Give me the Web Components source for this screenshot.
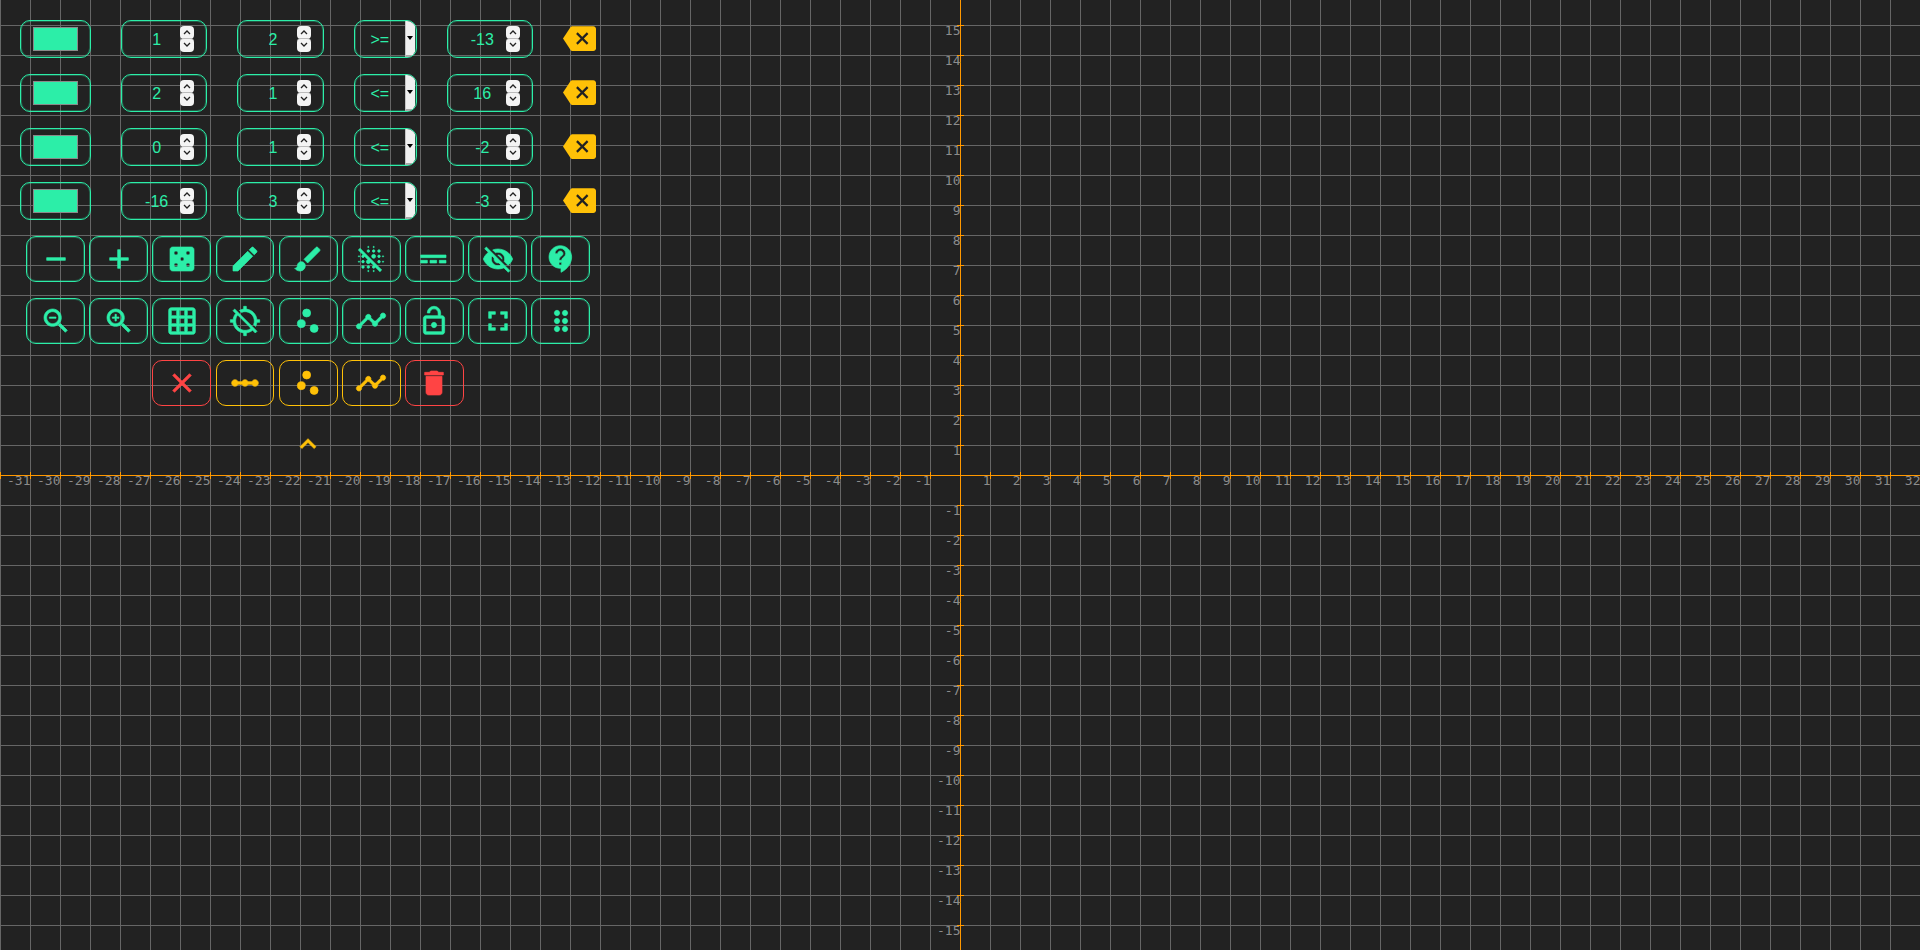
<!DOCTYPE html>
<html>
<head>
<meta charset="utf-8">
<title>Linear inequalities</title>
<style>
  html, body { margin: 0; height: 100%; background: #222; overflow: hidden; }
  body { font-family: "Liberation Sans", Arial, sans-serif; color: #2ceea8; }
</style>
</head>
<body>
<graph-canvas></graph-canvas>
<control-panel>
  <equation-row a="1" b="2" op="&gt;=" c="-13"></equation-row>
  <equation-row a="2" b="1" op="&lt;=" c="16"></equation-row>
  <equation-row a="0" b="1" op="&lt;=" c="-2"></equation-row>
  <equation-row a="-16" b="3" op="&lt;=" c="-3"></equation-row>
  <button-row>
    <icon-button icon="remove"></icon-button>
    <icon-button icon="add"></icon-button>
    <icon-button icon="casino"></icon-button>
    <icon-button icon="edit"></icon-button>
    <icon-button icon="brush"></icon-button>
    <icon-button icon="blurOff"></icon-button>
    <icon-button icon="powerInput"></icon-button>
    <icon-button icon="visibilityOff"></icon-button>
    <icon-button icon="contactSupport"></icon-button>
  </button-row>
  <button-row>
    <icon-button icon="zoomOut"></icon-button>
    <icon-button icon="zoomIn"></icon-button>
    <icon-button icon="gridOn"></icon-button>
    <icon-button icon="gpsOff"></icon-button>
    <icon-button icon="scatter"></icon-button>
    <icon-button icon="timeline"></icon-button>
    <icon-button icon="lockOpen"></icon-button>
    <icon-button icon="fullscreen"></icon-button>
    <icon-button icon="drag"></icon-button>
  </button-row>
  <button-row>
    <icon-button icon="clear" tone="danger"></icon-button>
    <icon-button icon="linearScale" tone="warn"></icon-button>
    <icon-button icon="scatter" tone="warn"></icon-button>
    <icon-button icon="timeline" tone="warn"></icon-button>
    <icon-button icon="trash" tone="danger"></icon-button>
  </button-row>
  <collapse-toggle></collapse-toggle>
</control-panel>

<script>
const ICONS = {
  remove: 'M19 13H5v-2h14v2z',
  add: 'M19 13h-6v6h-2v-6H5v-2h6V5h2v6h6v2z',
  casino: 'M19 3H5c-1.1 0-2 .9-2 2v14c0 1.1.9 2 2 2h14c1.1 0 2-.9 2-2V5c0-1.1-.9-2-2-2zM7.5 18c-.83 0-1.5-.67-1.5-1.5S6.67 15 7.5 15s1.5.67 1.5 1.5S8.33 18 7.5 18zm0-9C6.67 9 6 8.33 6 7.5S6.67 6 7.5 6 9 6.67 9 7.5 8.33 9 7.5 9zm4.5 4.5c-.83 0-1.5-.67-1.5-1.5s.67-1.5 1.5-1.5 1.5.67 1.5 1.5-.67 1.5-1.5 1.5zm4.5 4.5c-.83 0-1.5-.67-1.5-1.5s.67-1.5 1.5-1.5 1.5.67 1.5 1.5-.67 1.5-1.5 1.5zm0-9c-.83 0-1.5-.67-1.5-1.5S15.67 6 16.5 6s1.5.67 1.5 1.5S17.33 9 16.5 9z',
  edit: 'M3 17.25V21h3.75L17.81 9.94l-3.75-3.75L3 17.25zM20.71 7.04c.39-.39.39-1.02 0-1.41l-2.34-2.34c-.39-.39-1.02-.39-1.41 0l-1.83 1.83 3.75 3.75 1.83-1.83z',
  brush: 'M7 14c-1.66 0-3 1.34-3 3 0 1.31-1.16 2-2 2 .92 1.22 2.49 2 4 2 2.21 0 4-1.79 4-4 0-1.66-1.34-3-3-3zm13.71-9.37l-1.34-1.34c-.39-.39-1.02-.39-1.41 0L9 12.25 11.75 15l8.96-8.96c.39-.39.39-1.03 0-1.41z',
  blurOff: 'M14 7c.55 0 1-.45 1-1s-.45-1-1-1-1 .45-1 1 .45 1 1 1zm-.2 4.48l.2.02c.83 0 1.5-.67 1.5-1.5s-.67-1.5-1.5-1.5-1.5.67-1.5 1.5l.02.2c.09.67.61 1.19 1.28 1.28zM14 3.5c.28 0 .5-.22.5-.5s-.22-.5-.5-.5-.5.22-.5.5.22.5.5.5zm-4 0c.28 0 .5-.22.5-.5s-.22-.5-.5-.5-.5.22-.5.5.22.5.5.5zm11 7c.28 0 .5-.22.5-.5s-.22-.5-.5-.5-.5.22-.5.5.22.5.5.5zM10 7c.55 0 1-.45 1-1s-.45-1-1-1-1 .45-1 1 .45 1 1 1zm8 8c.55 0 1-.45 1-1s-.45-1-1-1-1 .45-1 1 .45 1 1 1zm0-4c.55 0 1-.45 1-1s-.45-1-1-1-1 .45-1 1 .45 1 1 1zm0-4c.55 0 1-.45 1-1s-.45-1-1-1-1 .45-1 1 .45 1 1 1zm-4 13.5c-.28 0-.5.22-.5.5s.22.5.5.5.5-.22.5-.5-.22-.5-.5-.5zM2.5 5.27l3.78 3.78L6 9c-.55 0-1 .45-1 1s.45 1 1 1 1-.45 1-1c0-.1-.03-.19-.06-.28l2.81 2.81c-.71.11-1.25.73-1.25 1.47 0 .83.67 1.5 1.5 1.5.74 0 1.36-.54 1.47-1.25l2.81 2.81c-.09-.03-.18-.06-.28-.06-.55 0-1 .45-1 1s.45 1 1 1 1-.45 1-1c0-.1-.03-.19-.06-.28l3.78 3.78L20 20.23 3.77 4 2.5 5.27zM10 17c-.55 0-1 .45-1 1s.45 1 1 1 1-.45 1-1-.45-1-1-1zm11-3.5c-.28 0-.5.22-.5.5s.22.5.5.5.5-.22.5-.5-.22-.5-.5-.5zM6 13c-.55 0-1 .45-1 1s.45 1 1 1 1-.45 1-1-.45-1-1-1zM3 9.5c-.28 0-.5.22-.5.5s.22.5.5.5.5-.22.5-.5-.22-.5-.5-.5zm7 11c-.28 0-.5.22-.5.5s.22.5.5.5.5-.22.5-.5-.22-.5-.5-.5zM6 17c-.55 0-1 .45-1 1s.45 1 1 1 1-.45 1-1-.45-1-1-1zm-3-3.5c-.28 0-.5.22-.5.5s.22.5.5.5.5-.22.5-.5-.22-.5-.5-.5z',
  powerInput: 'M2 9v2h19V9H2zm0 6h5v-2H2v2zm7 0h5v-2H9v2zm7 0h5v-2h-5v2z',
  visibilityOff: 'M12 7c2.76 0 5 2.24 5 5 0 .65-.13 1.26-.36 1.83l2.92 2.92c1.51-1.26 2.7-2.89 3.43-4.75-1.73-4.39-6-7.5-11-7.5-1.4 0-2.74.25-3.98.7l2.16 2.16C10.74 7.13 11.35 7 12 7zM2 4.27l2.28 2.28.46.46C3.08 8.3 1.78 10.02 1 12c1.73 4.39 6 7.5 11 7.5 1.55 0 3.03-.3 4.38-.84l.42.42L19.73 22 21 20.73 3.27 3 2 4.27zM7.53 9.8l1.55 1.55c-.05.21-.08.43-.08.65 0 1.66 1.34 3 3 3 .22 0 .44-.03.65-.08l1.55 1.55c-.67.33-1.41.53-2.2.53-2.76 0-5-2.24-5-5 0-.79.2-1.53.53-2.2zm4.31-.78l3.15 3.15.02-.16c0-1.66-1.34-3-3-3l-.17.01z',
  contactSupport: 'M11.5 2C6.81 2 3 5.81 3 10.5S6.81 19 11.5 19h.5v3c4.86-2.34 8-7 8-11.5C20 5.81 16.19 2 11.5 2zm1 14.5h-2v-2h2v2zm0-3.5h-2c0-3.25 3-3 3-5 0-1.1-.9-2-2-2s-2 .9-2 2h-2c0-2.21 1.79-4 4-4s4 1.79 4 4c0 2.5-3 2.75-3 5z',
  zoomOut: 'M15.5 14h-.79l-.28-.27C15.41 12.59 16 11.11 16 9.5 16 5.91 13.09 3 9.5 3S3 5.91 3 9.5 5.91 16 9.5 16c1.61 0 3.09-.59 4.23-1.57l.27.28v.79l5 4.99L20.49 19l-4.99-5zm-6 0C7.01 14 5 11.99 5 9.5S7.01 5 9.5 5 14 7.01 14 9.5 11.99 14 9.5 14zM7 9h5v1H7z',
  zoomIn: 'M15.5 14h-.79l-.28-.27C15.41 12.59 16 11.11 16 9.5 16 5.91 13.09 3 9.5 3S3 5.91 3 9.5 5.91 16 9.5 16c1.61 0 3.09-.59 4.23-1.57l.27.28v.79l5 4.99L20.49 19l-4.99-5zm-6 0C7.01 14 5 11.99 5 9.5S7.01 5 9.5 5 14 7.01 14 9.5 11.99 14 9.5 14zM12 10h-2v2H9v-2H7V9h2V7h1v2h2v1z',
  gridOn: 'M20 2H4c-1.1 0-2 .9-2 2v16c0 1.1.9 2 2 2h16c1.1 0 2-.9 2-2V4c0-1.1-.9-2-2-2zM8 20H4v-4h4v4zm0-6H4v-4h4v4zm0-6H4V4h4v4zm6 12h-4v-4h4v4zm0-6h-4v-4h4v4zm0-6h-4V4h4v4zm6 12h-4v-4h4v4zm0-6h-4v-4h4v4zm0-6h-4V4h4v4z',
  gpsOff: 'M20.94 11c-.46-4.17-3.77-7.48-7.94-7.94V1h-2v2.06c-1.13.12-2.19.46-3.14.98l1.5 1.5C10.16 5.19 11.06 5 12 5c3.87 0 7 3.13 7 7 0 .94-.19 1.84-.54 2.65l1.5 1.5c.52-.95.86-2.01.98-3.15H23v-2h-2.06zM3 4.27l2.04 2.04C3.97 7.62 3.26 9.23 3.06 11H1v2h2.06c.46 4.17 3.77 7.48 7.94 7.94V23h2v-2.06c1.77-.2 3.38-.91 4.69-1.98L19.73 21 21 19.73 4.27 3 3 4.27zm13.27 13.27C15.36 18.45 13.75 19 12 19c-3.87 0-7-3.13-7-7 0-1.75.55-3.36 1.46-4.54l9.08 9.08z',
  scatter: 'M7 11a3 3 0 1 0 0 6 3 3 0 0 0 0-6zM11 3a3 3 0 1 0 0 6 3 3 0 0 0 0-6zM16.6 14.6a3 3 0 1 0 0 6 3 3 0 0 0 0-6z',
  timeline: 'M23 8c0 1.1-.9 2-2 2-.18 0-.35-.02-.51-.07l-3.56 3.55c.05.16.07.34.07.52 0 1.1-.9 2-2 2s-2-.9-2-2c0-.18.02-.36.07-.52l-2.55-2.55c-.16.05-.34.07-.52.07s-.36-.02-.52-.07l-4.55 4.56c.05.16.07.33.07.51 0 1.1-.9 2-2 2s-2-.9-2-2 .9-2 2-2c.18 0 .35.02.51.07l4.56-4.55C8.02 9.36 8 9.18 8 9c0-1.1.9-2 2-2s2 .9 2 2c0 .18-.02.36-.07.52l2.55 2.55c.16-.05.34-.07.52-.07s.36.02.52.07l3.55-3.56C19.02 8.35 19 8.18 19 8c0-1.1.9-2 2-2s2 .9 2 2z',
  lockOpen: 'M12 17c1.1 0 2-.9 2-2s-.9-2-2-2-2 .9-2 2 .9 2 2 2zm6-9h-1V6c0-2.76-2.24-5-5-5S7 3.24 7 6h1.9c0-1.71 1.39-3.1 3.1-3.1 1.71 0 3.1 1.39 3.1 3.1v2H6c-1.1 0-2 .9-2 2v10c0 1.1.9 2 2 2h12c1.1 0 2-.9 2-2V10c0-1.1-.9-2-2-2zm0 12H6V10h12v10z',
  fullscreen: 'M7 14H5v5h5v-2H7v-3zm-2-4h2V7h3V5H5v5zm12 7h-3v2h5v-5h-2v3zM14 5v2h3v3h2V5h-5z',
  drag: 'M11 18c0 1.1-.9 2-2 2s-2-.9-2-2 .9-2 2-2 2 .9 2 2zm-2-8c-1.1 0-2 .9-2 2s.9 2 2 2 2-.9 2-2-.9-2-2-2zm0-6c-1.1 0-2 .9-2 2s.9 2 2 2 2-.9 2-2-.9-2-2-2zm6 4c1.1 0 2-.9 2-2s-.9-2-2-2-2 .9-2 2 .9 2 2 2zm0 2c-1.1 0-2 .9-2 2s.9 2 2 2 2-.9 2-2-.9-2-2-2zm0 6c-1.1 0-2 .9-2 2s.9 2 2 2 2-.9 2-2-.9-2-2-2z',
  clear: 'M19 6.41L17.59 5 12 10.59 6.41 5 5 6.41 10.59 12 5 17.59 6.41 19 12 13.41 17.59 19 19 17.59 13.41 12z',
  linearScale: 'M19.5 9.5c-1.03 0-1.9.62-2.29 1.5h-2.92c-.39-.88-1.26-1.5-2.29-1.5s-1.9.62-2.29 1.5H6.79c-.39-.88-1.26-1.5-2.29-1.5C3.12 9.5 2 10.62 2 12s1.12 2.5 2.5 2.5c1.03 0 1.9-.62 2.29-1.5h2.92c.39.88 1.26 1.5 2.29 1.5s1.9-.62 2.29-1.5h2.92c.39.88 1.26 1.5 2.29 1.5 1.38 0 2.5-1.12 2.5-2.5s-1.12-2.5-2.5-2.5z',
  trash: 'M6 19c0 1.1.9 2 2 2h8c1.1 0 2-.9 2-2V7H6v12zM19 4h-3.5l-1-1h-5l-1 1H5v2h14V4z',
  chevronUp: 'M7.41 15.41L12 10.83l4.59 4.58L18 14l-6-6-6 6z',
  backspace: 'M22 3H7c-.69 0-1.23.35-1.59.88L0 12l5.41 8.11c.36.53.9.89 1.59.89h15c1.1 0 2-.9 2-2V5c0-1.1-.9-2-2-2z'
};

function iconSvg(name) {
  return `<svg viewBox="0 0 24 24" width="32" height="32" fill="currentColor" stroke="currentColor" stroke-width=".5"><path d="${ICONS[name]}"/></svg>`;
}

class GraphCanvas extends HTMLElement {
  connectedCallback() {
    const root = this.attachShadow({ mode: 'open' });
    const width = 1920, height = 950, step = 30, cx = 960, cy = 475;
    let lines = '', ticks = '', labels = '';

    for (let x = cx % step; x <= width; x += step) {
      lines += `<path d="M${x + 0.5} 0V${height}"/>`;
      if (x !== cx) ticks += `<path d="M${x + 0.5} ${cy - 3}V${cy + 4}"/>`;
      const n = (x - cx) / step;
      // -32 would end on the left edge of the page
      if (n !== 0 && x > 0) labels += `<text x="${x + 0.5}" y="${cy + 10}">${n}</text>`;
    }
    for (let y = cy % step; y <= height; y += step) {
      lines += `<path d="M0 ${y + 0.5}H${width}"/>`;
      if (y !== cy) ticks += `<path d="M${cx - 3} ${y + 0.5}H${cx + 4}"/>`;
      const n = (cy - y) / step;
      if (n !== 0) labels += `<text x="${cx + 0.5}" y="${y + 10}">${n}</text>`;
    }

    root.innerHTML = `
      <style>
        :host { position: absolute; inset: 0; display: block; }
        svg { display: block; }
        .grid { stroke: #666; stroke-width: 1; }
        .axes { stroke: #ff9800; stroke-width: 1; }
        .labels { font: 13px "DejaVu Sans Mono", monospace; fill: #8c8c8c; text-anchor: end; }
      </style>
      <svg width="${width}" height="${height}" shape-rendering="crispEdges">
        <g class="grid">${lines}</g>
        <g class="axes">
          <path d="M0 ${cy + 0.5}H${width}"/>
          <path d="M${cx + 0.5} 0V${height}"/>
          ${ticks}
        </g>
        <g class="labels" shape-rendering="auto">${labels}</g>
      </svg>
    `;
  }
}

class ControlPanel extends HTMLElement {
  connectedCallback() {
    this.attachShadow({ mode: 'open' }).innerHTML = `
      <style>
        :host {
          position: relative;
          display: flex;
          flex-direction: column;
          gap: 16px;
          width: 616.3px;
          padding-top: 20px;
        }
      </style>
      <slot></slot>
    `;
  }
}

class EquationRow extends HTMLElement {
  connectedCallback() {
    const a = this.getAttribute('a');
    const b = this.getAttribute('b');
    const op = this.getAttribute('op').replace('<', '&lt;').replace('>', '&gt;');
    const c = this.getAttribute('c');
    this.attachShadow({ mode: 'open' }).innerHTML = `
      <style>
        :host {
          display: flex;
          align-items: center;
          gap: 30px;
          height: 38px;
          padding-left: 20px;
        }
      </style>
      <color-box></color-box>
      <num-input>${a}</num-input>
      <num-input>${b}</num-input>
      <op-select>${op}</op-select>
      <num-input>${c}</num-input>
      <delete-key></delete-key>
    `;
  }
}

const EDGE = `
  border: 1px solid #2ceea8;
  box-shadow: inset 0 0 0 1px rgba(44, 238, 168, .28);
  border-radius: 10px;
`;

class ColorBox extends HTMLElement {
  connectedCallback() {
    this.attachShadow({ mode: 'open' }).innerHTML = `
      <style>
        :host {
          display: flex;
          align-items: center;
          justify-content: center;
          box-sizing: border-box;
          width: 71px;
          height: 38px;
          ${EDGE}
        }
        div { width: 45px; height: 24px; box-sizing: border-box; background: #2ceea8; border: 1px solid #8a8a8a; }
      </style>
      <div></div>
    `;
  }
}

class NumInput extends HTMLElement {
  connectedCallback() {
    const arrow = d => `<svg viewBox="0 0 14 13" width="14" height="13" fill="none" stroke="#222" stroke-width="1.3"><path d="${d}"/></svg>`;
    this.attachShadow({ mode: 'open' }).innerHTML = `
      <style>
        :host {
          display: flex;
          align-items: center;
          box-sizing: border-box;
          width: 86.3px;
          height: 38px;
          padding-right: 12px;
          ${EDGE}
          font-size: 16px;
          color: #2ceea8;
        }
        .value { flex: 1; padding: 1px 0 0 11px; text-align: center; }
        .spin { display: flex; flex-direction: column; width: 14px; }
        .spin span { display: flex; height: 13.5px; background: #f4f4f4; border-radius: 4px; }
        .spin span + span { margin-top: -1px; border-top: 1px solid #bbb; height: 13px; }
        svg { display: block; }
      </style>
      <div class="value"><slot></slot></div>
      <div class="spin">
        <span>${arrow('M4 8l3-3 3 3')}</span>
        <span>${arrow('M4 4l3 3 3-3')}</span>
      </div>
    `;
  }
}

class OpSelect extends HTMLElement {
  connectedCallback() {
    this.attachShadow({ mode: 'open' }).innerHTML = `
      <style>
        :host {
          display: flex;
          align-items: stretch;
          box-sizing: border-box;
          width: 63px;
          height: 38px;
          ${EDGE}
          overflow: hidden;
          font-size: 16px;
          color: #2ceea8;
        }
        .value { flex: 1; display: flex; align-items: center; justify-content: center; padding-top: 1px; }
        .arrow {
          display: flex;
          align-items: center;
          justify-content: center;
          box-sizing: border-box;
          width: 9.5px;
          margin-right: 1px;
          background: #f0f0f0;
          border-left: 1px solid #c4c4c4;
          border-bottom: 2px solid #a8a8a8;
        }
        .arrow i { display: block; border: 3px solid transparent; border-top: 4px solid #000; border-bottom: 0; }
      </style>
      <div class="value"><slot></slot></div>
      <div class="arrow"><i></i></div>
    `;
  }
}

class DeleteKey extends HTMLElement {
  connectedCallback() {
    this.attachShadow({ mode: 'open' }).innerHTML = `
      <style>
        :host { display: block; align-self: flex-start; margin-top: 2px; width: 33px; height: 33px; color: #ffc107; }
        svg { display: block; }
      </style>
      <svg viewBox="0 0 24 24" width="33" height="33">
        <path fill="currentColor" d="${ICONS.backspace}"/>
        <path fill="none" stroke="#222" stroke-width="1.6" d="M10.1 8.1l7.8 7.8M17.9 8.1l-7.8 7.8"/>
      </svg>
    `;
  }
}

class ButtonRow extends HTMLElement {
  connectedCallback() {
    this.attachShadow({ mode: 'open' }).innerHTML = `
      <style>
        :host { display: flex; justify-content: center; gap: 4.35px; }
      </style>
      <slot></slot>
    `;
  }
}

class IconButton extends HTMLElement {
  connectedCallback() {
    const tones = { danger: '#ff4444', warn: '#ffc107' };
    const color = tones[this.getAttribute('tone')] || '#2ceea8';
    const edge = this.hasAttribute('tone') ? `
      border: 1px solid ${color};
      border-radius: 10px;
    ` : EDGE;
    this.attachShadow({ mode: 'open' }).innerHTML = `
      <style>
        :host {
          display: flex;
          align-items: center;
          justify-content: center;
          box-sizing: border-box;
          width: 58.8px;
          height: 46px;
          padding-bottom: 1px;
          ${edge}
          color: ${color};
        }
        svg { display: block; }
      </style>
      ${iconSvg(this.getAttribute('icon'))}
    `;
  }
}

class CollapseToggle extends HTMLElement {
  connectedCallback() {
    this.attachShadow({ mode: 'open' }).innerHTML = `
      <style>
        :host { display: flex; justify-content: center; padding-top: 6px; color: #ffc107; }
        svg { display: block; }
      </style>
      ${iconSvg('chevronUp')}
    `;
  }
}

customElements.define('graph-canvas', GraphCanvas);
customElements.define('color-box', ColorBox);
customElements.define('num-input', NumInput);
customElements.define('op-select', OpSelect);
customElements.define('delete-key', DeleteKey);
customElements.define('equation-row', EquationRow);
customElements.define('icon-button', IconButton);
customElements.define('button-row', ButtonRow);
customElements.define('collapse-toggle', CollapseToggle);
customElements.define('control-panel', ControlPanel);
</script>
</body>
</html>
